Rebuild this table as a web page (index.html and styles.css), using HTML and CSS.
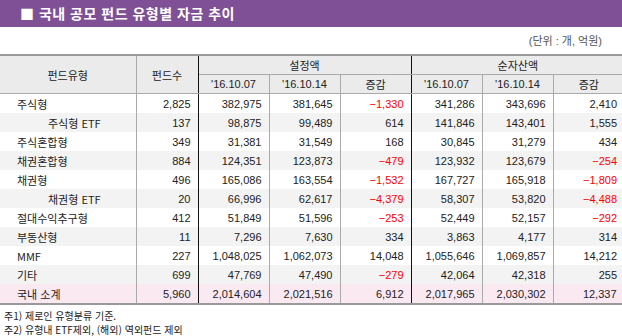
FILE: index.html
```html
<!DOCTYPE html>
<html lang="ko">
<head>
<meta charset="UTF-8">
<title>국내 공모 펀드 유형별 자금 추이</title>
<link rel="stylesheet" href="styles.css">
</head>
<body>
<div class="title">■ 국내 공모 펀드 유형별 자금 추이</div>
<div class="unit">(단위 : 개, 억원)</div>
<table class="funds">
  <colgroup>
    <col class="w-type"><col class="w-cnt">
    <col class="w-num"><col class="w-num"><col class="w-num">
    <col class="w-num"><col class="w-num"><col class="w-num">
  </colgroup>
  <thead>
    <tr>
      <th rowspan="2">펀드유형</th>
      <th rowspan="2" class="sep">펀드수</th>
      <th colspan="3" class="sep">설정액</th>
      <th colspan="3">순자산액</th>
    </tr>
    <tr class="sub">
      <th>'16.10.07</th><th>'16.10.14</th><th class="sep">증감</th>
      <th>'16.10.07</th><th>'16.10.14</th><th>증감</th>
    </tr>
  </thead>
  <tbody>
    <tr><td class="name">주식형</td><td class="sep">2,825</td><td>382,975</td><td>381,645</td><td class="neg sep">−1,330</td><td>341,286</td><td>343,696</td><td>2,410</td></tr>
    <tr class="alt"><td class="name etf">주식형 ETF</td><td class="sep">137</td><td>98,875</td><td>99,489</td><td class="sep">614</td><td>141,846</td><td>143,401</td><td>1,555</td></tr>
    <tr><td class="name">주식혼합형</td><td class="sep">349</td><td>31,381</td><td>31,549</td><td class="sep">168</td><td>30,845</td><td>31,279</td><td>434</td></tr>
    <tr class="alt"><td class="name">채권혼합형</td><td class="sep">884</td><td>124,351</td><td>123,873</td><td class="neg sep">−479</td><td>123,932</td><td>123,679</td><td class="neg">−254</td></tr>
    <tr><td class="name">채권형</td><td class="sep">496</td><td>165,086</td><td>163,554</td><td class="neg sep">−1,532</td><td>167,727</td><td>165,918</td><td class="neg">−1,809</td></tr>
    <tr class="alt"><td class="name etf">채권형 ETF</td><td class="sep">20</td><td>66,996</td><td>62,617</td><td class="neg sep">−4,379</td><td>58,307</td><td>53,820</td><td class="neg">−4,488</td></tr>
    <tr><td class="name">절대수익추구형</td><td class="sep">412</td><td>51,849</td><td>51,596</td><td class="neg sep">−253</td><td>52,449</td><td>52,157</td><td class="neg">−292</td></tr>
    <tr class="alt"><td class="name">부동산형</td><td class="sep">11</td><td>7,296</td><td>7,630</td><td class="sep">334</td><td>3,863</td><td>4,177</td><td>314</td></tr>
    <tr><td class="name">MMF</td><td class="sep">227</td><td>1,048,025</td><td>1,062,073</td><td class="sep">14,048</td><td>1,055,646</td><td>1,069,857</td><td>14,212</td></tr>
    <tr class="alt"><td class="name">기타</td><td class="sep">699</td><td>47,769</td><td>47,490</td><td class="neg sep">−279</td><td>42,064</td><td>42,318</td><td>255</td></tr>
    <tr class="total"><td class="name">국내 소계</td><td class="sep">5,960</td><td>2,014,604</td><td>2,021,516</td><td class="sep">6,912</td><td>2,017,965</td><td>2,030,302</td><td class="last">12,337</td></tr>
  </tbody>
</table>
<div class="notes">
  <p>주1) 제로인 유형분류 기준.</p>
  <p>주2) 유형내 ETF제외, (해외) 역외펀드 제외</p>
</div>
</body>
</html>
```

FILE: styles.css
```css
body { margin: 0; width: 622px; background: #fff; font-family: "Liberation Sans", "Noto Sans CJK KR", sans-serif; color: #222; }
.title { height: 27px; line-height: 26px; padding-left: 20px; background: #7f5095; color: #fff; font-family: "Noto Sans CJK KR", sans-serif; font-size: 14px; font-weight: bold; letter-spacing: 0.5px; }
.unit { height: 27px; line-height: 28px; padding-right: 20px; text-align: right; font-size: 11px; color: #555; }
.funds { width: 622px; border-collapse: collapse; table-layout: fixed; font-size: 11px; line-height: 16px; border-top: 2px solid #999; border-bottom: 2px solid #999; }
.w-type { width: 136px; }
.w-cnt { width: 62px; }
.w-num { width: 71px; }
.funds th { height: 18px; padding: 0; font-weight: normal; background: #ebebeb; color: #222; border-left: 1px solid #aaa; font-family: "Noto Sans CJK KR", sans-serif; }
.funds thead tr:first-child th { border-bottom: 1px solid #aaa; }
.funds .sub th { font-family: "Liberation Sans", sans-serif; border-bottom: 1px solid #aaa; }
.funds .sub th:nth-child(3), .funds .sub th:nth-child(6) { font-family: "Noto Sans CJK KR", sans-serif; }
.funds th:first-child { border-left: none; }
.funds td { height: 19px; padding: 0 7px 0 0; text-align: right; border-left: 1px solid #aaa; white-space: nowrap; }
.funds .sep { border-right: 1px solid #111; }
.funds td.name { text-align: left; padding-left: 17px; border-left: none; font-family: "Noto Sans CJK KR", sans-serif; }
.funds td.etf { padding-left: 48px; }
.funds .alt td { background: #f3f3f3; }
.funds .total td { background: #fbe9f2; }
.funds .total td.last { border-right: 1px solid #111; }
.neg { color: #f00; }
.notes { padding: 4px 0 0 4px; font-size: 10px; font-family: "Noto Sans CJK KR", sans-serif; }
.notes p { margin: 0; line-height: 14px; }
```
